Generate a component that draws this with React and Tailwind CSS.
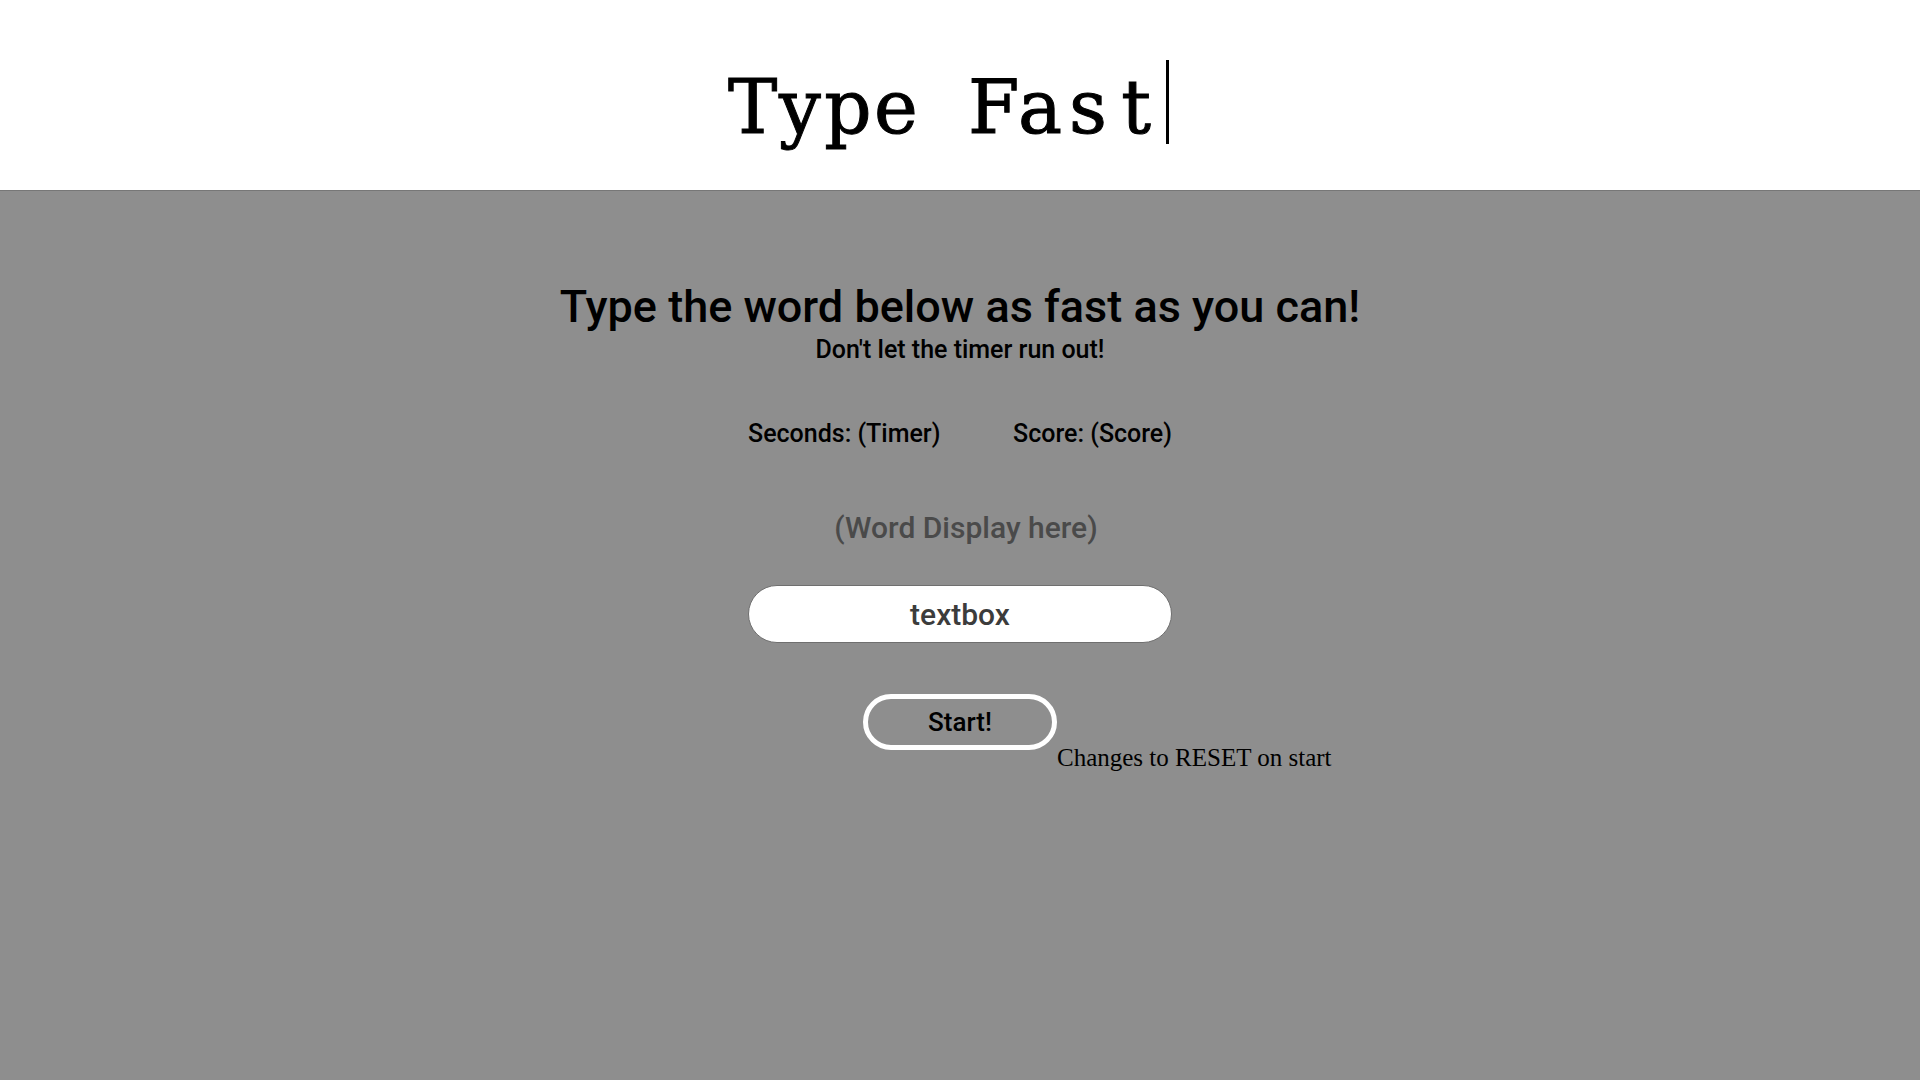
import React from 'react';

const TITLE = 'Type Fast'.split('');

const App = () => {
  return (
    <div className="min-h-screen bg-[#8e8e8e] font-['Roboto',sans-serif]">
      <header className="h-[191px] bg-white border-b border-[#777777] flex justify-center">
        <h1 className="mt-[60px] mr-[23px] h-[84px] flex border-r-[3px] border-black pr-[6px] font-['DejaVu_Serif',serif] text-[74px] leading-[95px] text-black [-webkit-text-stroke:1px_black]">
          {TITLE.map((ch, i) => (
            <span key={i} className="inline-block w-[48px] text-center whitespace-pre">
              {ch}
            </span>
          ))}
        </h1>
      </header>

      <main className="flex flex-col items-center text-black">
        <h2 className="pt-[90px] text-[45px] leading-[52px] font-medium">
          Type the word below as fast as you can!
        </h2>
        <p className="mt-[2px] text-[25px] leading-[30px] font-medium">Don't let the timer run out!</p>

        <div className="mt-[54px] w-[424px] flex justify-between text-[25px] leading-[30px] font-medium">
          <span>Seconds: (Timer)</span>
          <span>Score: (Score)</span>
        </div>

        <div className="mt-[61px] pl-3 text-[30px] leading-[36px] font-medium text-[#4a4a4a]">(Word Display here)</div>

        <input
          type="text"
          placeholder="textbox"
          className="mt-[39px] w-[424px] h-[58px] rounded-full bg-white border border-[#6f6f6f] text-center text-[30px] font-medium text-[#3c3c3c] placeholder:text-[#3c3c3c] outline-none"
        />

        <div className="mt-[51px] w-full grid grid-cols-[1fr_auto_1fr]">
          <div></div>
          <button className="w-[194px] h-[56px] rounded-full border-[5px] border-white text-[26px] font-medium text-black">
            Start!
          </button>
          <span className="self-end translate-y-[22px] font-['Liberation_Serif',serif] text-[25px] leading-[28px] text-black">
            Changes to RESET on start
          </span>
        </div>
      </main>
    </div>
  );
};

export default App;
